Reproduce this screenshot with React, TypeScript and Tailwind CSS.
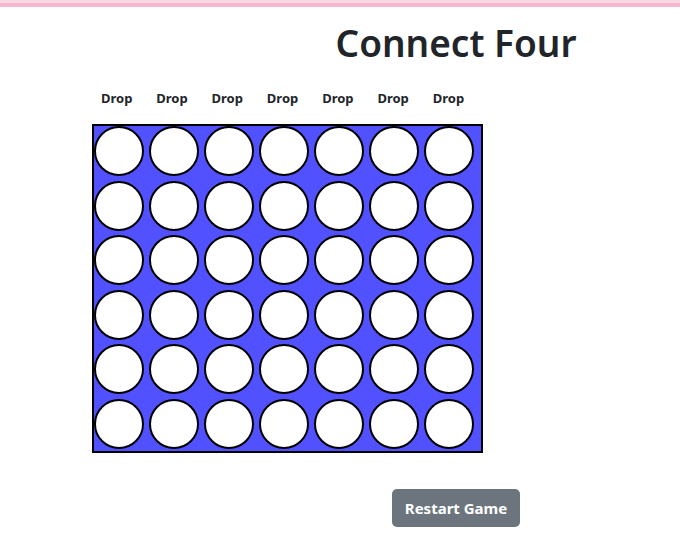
const COLS = 7;
const ROWS = 6;

export default function App() {
  const board = Array.from({ length: ROWS }, () => Array(COLS).fill(null));

  return (
    <div className="min-h-screen bg-white font-['Noto_Sans',sans-serif] text-[#212529]">
      <div className="h-[3px] bg-[#fdd8e4]" />
      <div className="h-[4px] bg-[#f5b8cd]" />

      <h1 className="mt-[12px] pl-[232px] text-center text-[37px] font-semibold leading-[48px]">
        Connect Four
      </h1>

      <div className="ml-[89px] mt-[21px] w-fit">
        <div className="grid grid-cols-[repeat(7,55.3px)]">
          {Array.from({ length: COLS }, (_, i) => (
            <button
              key={i}
              type="button"
              className="text-center text-[13px] font-bold leading-[20px]"
            >
              Drop
            </button>
          ))}
        </div>

        <div className="ml-[3px] mt-[16px] w-fit border-2 border-black bg-[#5151ff] pb-[2px] pr-[7px]">
          <div className="grid grid-cols-[repeat(7,50px)] gap-x-[5px] gap-y-[4.6px]">
            {board.flat().map((_, i) => (
              <div
                key={i}
                className="h-[50px] w-[50px] rounded-full border-2 border-black bg-white"
              />
            ))}
          </div>
        </div>
      </div>

      <div className="mt-[36px] pl-[232px] text-center">
        <button
          type="button"
          className="rounded-[5px] bg-[#6c757d] px-[13px] py-[7px] text-[15px] font-bold leading-[24px] text-white"
        >
          Restart Game
        </button>
      </div>
    </div>
  );
}
